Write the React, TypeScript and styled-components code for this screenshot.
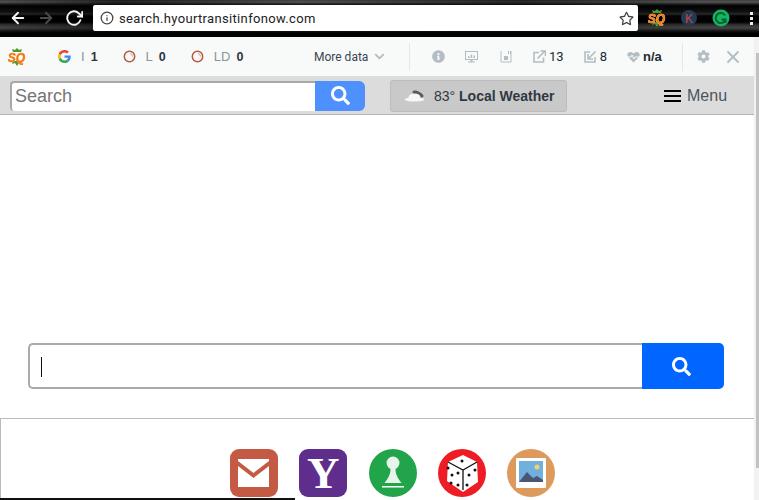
import styled, { createGlobalStyle } from 'styled-components'
import { FaSearch, FaInfoCircle, FaCog, FaRegStar } from 'react-icons/fa'
import { FiArrowLeft, FiArrowRight, FiRotateCw, FiInfo, FiX, FiChevronDown } from 'react-icons/fi'

const GlobalStyle = createGlobalStyle`
  html, body {
    margin: 0;
    padding: 0;
    background: #fff;
    overflow: hidden;
    font-family: 'Liberation Sans', Arial, sans-serif;
  }
`

const Page = styled.div`
  width: 759px;
  height: 500px;
  overflow: hidden;
  position: relative;
`

const ChromeBar = styled.div`
  height: 37px;
  box-sizing: border-box;
  display: flex;
  align-items: flex-start;
  background:
    linear-gradient(90deg, transparent 0, rgba(0, 0, 0, 0.55) 120px, transparent 300px, rgba(0, 0, 0, 0.5) 520px, transparent 700px),
    linear-gradient(180deg, #3c3c3c 0, #555 2px, #222 4px, #000 6px, #111 12px, #2a2a2a 14px, #000 16px, #000 22px, #333 25px, #444 28px, #151515 31px, #000 33px, #000 37px);
`

const NavButtons = styled.div`
  width: 93px;
  height: 32px;
  padding-left: 9px;
  box-sizing: border-box;
  display: flex;
  align-items: center;
  gap: 10px;
  margin-top: 2px;
`

const NavIcon = styled.span<{ $dim?: boolean }>`
  display: flex;
  font-size: 18px;
  color: ${p => (p.$dim ? '#4a4a4a' : '#f4f4f4')};
`

const Omnibox = styled.div`
  width: 545px;
  height: 26px;
  margin-top: 5px;
  background: #fff;
  border-radius: 2px;
  display: flex;
  align-items: center;
  padding: 0 4px 0 7px;
  box-sizing: border-box;
  font-family: 'Roboto', sans-serif;
  font-size: 13px;
  letter-spacing: 0.34px;
  color: #222;
  gap: 5px;
`

const UrlText = styled.span`
  flex: 1;
`

const Extensions = styled.div`
  flex: 1;
  height: 32px;
  display: flex;
  align-items: center;
  padding-left: 10px;
  gap: 14px;
  margin-top: 2px;
`

const ExtIcon = styled.svg`
  width: 18px;
  height: 18px;
  flex: none;
`

const LogoText = styled.text`
  font-family: 'Liberation Sans', sans-serif;
  font-size: 12px;
  font-weight: 700;
  font-style: italic;
  fill: #f47a12;
  stroke: #f47a12;
  stroke-width: 0.5px;
  filter: drop-shadow(0 0 0.6px #fff);
`

const Kebab = styled.div`
  display: flex;
  flex-direction: column;
  gap: 2px;
  margin-left: 6px;
`

const Dot = styled.i`
  width: 3px;
  height: 3px;
  background: #eee;
  display: block;
`

const SeoBar = styled.div`
  height: 39px;
  width: 754px;
  box-sizing: border-box;
  background: #f8f9f9;
  display: flex;
  align-items: center;
  padding-left: 8px;
  font-size: 13px;
  color: #3b4652;
`

const MetricList = styled.div`
  margin-left: 32px;
  width: 256px;
  display: flex;
  align-items: center;
  gap: 25px;
`

const Metric = styled.span`
  display: flex;
  align-items: center;
  color: #8a959c;
`

const MetricLabel = styled.span`
  margin: 0 6px 0 10px;
`

const MetricValue = styled.b`
  color: #2d3640;
  font-size: 12.5px;
`

const MoreData = styled.span`
  display: flex;
  align-items: center;
  gap: 4px;
  font-family: 'Roboto', sans-serif;
  font-size: 12px;
  color: #3b4652;
  width: 95px;
`

const Divider = styled.span`
  width: 1px;
  height: 28px;
  background: #e4e6e7;
  flex: none;
`

const IconStats = styled.div`
  display: flex;
  align-items: center;
  width: 272px;
  padding-left: 22px;
  box-sizing: border-box;
  gap: 20px;
  color: #b3bdc2;
  font-size: 13px;
`

const Stat = styled.span`
  display: flex;
  align-items: center;
  gap: 3px;
`

const StatValue = styled.span<{ $bold?: boolean }>`
  color: #222b33;
  font-size: 13px;
  font-weight: ${p => (p.$bold ? 700 : 400)};
  font-family: ${p => (p.$bold ? "'Liberation Sans'" : "'Roboto'")}, sans-serif;
`

const PageGlyph = styled.svg`
  width: 12px;
  height: 13px;
  margin: 0 1px 0 2px;
  flex: none;
`

const SeoTools = styled.div`
  display: flex;
  align-items: center;
  gap: 13px;
  padding-left: 14px;
  color: #b3bdc2;
  font-size: 13px;
`

const SearchRow = styled.div`
  height: 39px;
  width: 754px;
  box-sizing: border-box;
  background: #dcdcdc;
  border-bottom: 1px solid #b4b4b4;
  display: flex;
  align-items: center;
  padding: 1px 0 0 10px;
`

const TopSearch = styled.div`
  width: 355px;
  height: 30px;
  display: flex;
`

const TopInput = styled.div`
  flex: 1;
  background: #fff;
  border: 2px solid #a8a8a8;
  border-right: 0;
  border-bottom-width: 0;
  border-radius: 4px 0 0 4px;
  box-sizing: border-box;
  padding-left: 3px;
  font-size: 18px;
  line-height: 27px;
  color: #757575;
`

const TopButton = styled.div`
  width: 50px;
  background: #4d90fe;
  border-radius: 0 6px 6px 0;
  display: flex;
  align-items: center;
  justify-content: center;
  color: #fff;
  font-size: 19px;
`

const WeatherButton = styled.div`
  margin-left: 25px;
  width: 177px;
  height: 32px;
  box-sizing: border-box;
  background: #c9c9c9;
  border: 1px solid #bcbcbc;
  border-radius: 3px;
  display: flex;
  align-items: center;
  padding-left: 13px;
  gap: 8px;
  font-size: 14px;
  color: #2f3842;
`

const MenuLink = styled.div`
  margin-left: 97px;
  display: flex;
  align-items: center;
  gap: 6px;
  font-size: 16px;
  color: #4b5560;
`

const MenuBars = styled.span`
  width: 17px;
  height: 12px;
  display: flex;
  flex-direction: column;
  justify-content: space-between;
`

const MenuBar = styled.i`
  display: block;
  height: 2px;
  background: #000;
`

const Main = styled.div`
  width: 754px;
  box-sizing: border-box;
  padding: 228px 30px 0 28px;
`

const BigSearch = styled.div`
  height: 46px;
  display: flex;
`

const BigInput = styled.div`
  flex: 1;
  border: 2px solid #aaa;
  border-right: 0;
  border-radius: 5px 0 0 5px;
  display: flex;
  align-items: center;
  padding: 1px 0 0 11px;
`

const Caret = styled.span`
  width: 1px;
  height: 20px;
  background: #111;
`

const BigButton = styled.div`
  width: 82px;
  box-sizing: border-box;
  padding-right: 4px;
  background: #0066ff;
  border-radius: 0 5px 5px 0;
  display: flex;
  align-items: center;
  justify-content: center;
  color: #fff;
  font-size: 19px;
`

const AppsPanel = styled.div`
  margin-top: 29px;
  width: 754px;
  height: 82px;
  box-sizing: border-box;
  border-top: 1px solid #bbb;
  border-left: 1px solid #bbb;
  padding: 30px 0 0 229px;
  display: flex;
  gap: 21.25px;
`

const AppIcon = styled.svg`
  width: 48px;
  height: 48px;
  flex: none;
`

const YahooTile = styled.div`
  width: 48px;
  height: 48px;
  flex: none;
  border-radius: 9px;
  background: #5f2d8c;
  color: #fff;
  text-align: center;
  font-family: 'Liberation Serif', serif;
  font-weight: 700;
  font-size: 45px;
  line-height: 48px;
`

const ScrollTrack = styled.div`
  position: absolute;
  right: 0;
  top: 37px;
  bottom: 0;
  width: 5px;
  background: #f1f1f1;
`

const ScrollThumb = styled.div`
  position: absolute;
  right: 0;
  top: 16px;
  width: 3px;
  height: 415px;
  background: #c1c1c1;
`

const BottomLine = styled.div`
  position: absolute;
  left: 0;
  bottom: 0;
  width: 295px;
  height: 2px;
  background: #111;
`

const SqLogo = () => (
  <ExtIcon viewBox="0 0 18 18">
    <path d="M5 4L4 1l3 1 2-2 2 2 3-1-1 3zM5 13l-1 3 3-1 2 3 2-3 3 1-1-3z" fill="#4f9a2f" />
    <LogoText x="8.500" y="13.500" textAnchor="middle">SQ</LogoText>
  </ExtIcon>
)

const GoogleG = () => (
  <svg width="13" height="13" viewBox="0 0 48 48">
    <path fill="#EA4335" d="M24 9.500c3.500 0 6.700 1.300 9.100 3.400l6.800-6.800C35.800 2.400 30.300 0 24 0 14.600 0 6.500 5.400 2.600 13.200l7.900 6.200C12.400 13.600 17.700 9.500 24 9.500z" />
    <path fill="#4285F4" d="M46.900 24.500c0-1.600-.1-3.100-.4-4.500H24v9h12.900c-.6 3-2.200 5.500-4.800 7.200l7.700 6c4.500-4.200 7.100-10.300 7.100-17.700z" />
    <path fill="#FBBC05" d="M10.500 28.600c-.5-1.400-.8-3-.8-4.600s.3-3.200.8-4.600l-7.900-6.200C.9 16.500 0 20.100 0 24s.9 7.500 2.600 10.800z" />
    <path fill="#34A853" d="M24 48c6.500 0 11.900-2.100 15.900-5.800l-7.700-6c-2.200 1.400-4.900 2.300-8.200 2.300-6.300 0-11.600-4.100-13.500-9.900l-7.900 6.200C6.500 42.600 14.600 48 24 48z" />
  </svg>
)

const Ring = () => (
  <svg width="13" height="13" viewBox="0 0 13 13">
    <circle cx="6.500" cy="6.500" r="5.200" fill="none" stroke="#b5583f" strokeWidth="1.500" />
    <path d="M7 3.500a3 3 0 0 1 2.500 3" fill="none" stroke="#d9a08f" strokeWidth="1" />
  </svg>
)

const MonitorIcon = () => (
  <svg width="13" height="13" viewBox="0 0 13 13" fill="#b3bdc2">
    <path fillRule="evenodd" d="M0 1h13v9H7.500v1.500H10V12.500H3V11.500h2.500V10H0zM1 2v7h11V2z" />
    <path d="M3 6h1.500v2H3zM5.700 4.500h1.500V8H5.700zM8.500 5.500H10V8H8.500z" />
  </svg>
)

const PageIcon = () => (
  <PageGlyph viewBox="0 0 12 13" fill="none" stroke="#b3bdc2">
    <path d="M1 1v11h10V1" />
    <path d="M4 6h4v4H4z" fill="#b3bdc2" stroke="none" />
    <path d="M8.500 1v3M10.500 1v3" />
  </PageGlyph>
)

const LinkOutIcon = () => (
  <svg width="13" height="13" viewBox="0 0 13 13" fill="none" stroke="#b3bdc2" strokeWidth="1.600">
    <path d="M6 2.500H1v9.500h9.500V7.500" />
    <path d="M4.500 8.500L11.500 1.500M7.500 1h5v5" />
  </svg>
)

const LinkInIcon = () => (
  <svg width="13" height="13" viewBox="0 0 13 13" fill="none" stroke="#b3bdc2" strokeWidth="1.600">
    <path d="M6 2H1v10h10V7" />
    <path d="M11.500 1.500L4.500 8.500M4 4v5h5" />
  </svg>
)

const HeartIcon = () => (
  <svg width="13" height="12" viewBox="0 0 13 12" fill="#b3bdc2">
    <path d="M6.500 11.500L1 6C-.5 4 .5 1 3.300 1c1.400 0 2.500.8 3.200 1.800C7.200 1.800 8.300 1 9.700 1c2.800 0 3.800 3 2.300 5z" />
    <path d="M0 6h4l1-2 2 4 1-2h5" stroke="#f8f9f9" strokeWidth="1" fill="none" />
  </svg>
)

const Cloud = () => (
  <svg width="22" height="13" viewBox="0 0 22 13">
    <ellipse cx="14" cy="5" rx="6" ry="2.500" transform="rotate(25 14 5)" fill="#5a5a5a" />
    <ellipse cx="10.500" cy="8" rx="6" ry="3.500" fill="#f6f6f6" />
    <ellipse cx="10.500" cy="10.500" rx="10" ry="2" fill="#f6f6f6" />
  </svg>
)

const App = () => (
  <Page>
    <GlobalStyle />
    <ChromeBar>
      <NavButtons>
        <NavIcon><FiArrowLeft strokeWidth={2.500} /></NavIcon>
        <NavIcon $dim><FiArrowRight strokeWidth={2.500} /></NavIcon>
        <NavIcon><FiRotateCw strokeWidth={2.500} /></NavIcon>
      </NavButtons>
      <Omnibox>
        <FiInfo size={14} color="#444" strokeWidth={2.200} />
        <UrlText>search.hyourtransitinfonow.com</UrlText>
        <FaRegStar size={15} color="#444" />
      </Omnibox>
      <Extensions>
        <SqLogo />
        <ExtIcon viewBox="0 0 18 18">
          <circle cx="9" cy="9" r="8" fill="#243a52" />
          <text x="9" y="13.500" textAnchor="middle" fontSize="12" fill="#c8473f" fontFamily="Liberation Sans">K</text>
        </ExtIcon>
        <ExtIcon viewBox="0 0 18 18">
          <circle cx="9" cy="9" r="8.500" fill="#15b36b" />
          <path d="M13 6.500A5 5 0 1 0 13.500 10.500H9.500M13.500 10.500V14" fill="none" stroke="#062" strokeWidth="2" />
        </ExtIcon>
        <Kebab><Dot /><Dot /><Dot /></Kebab>
      </Extensions>
    </ChromeBar>

    <SeoBar>
      <SqLogo />
      <MetricList>
        <Metric><GoogleG /><MetricLabel>I</MetricLabel><MetricValue>1</MetricValue></Metric>
        <Metric><Ring /><MetricLabel>L</MetricLabel><MetricValue>0</MetricValue></Metric>
        <Metric><Ring /><MetricLabel>LD</MetricLabel><MetricValue>0</MetricValue></Metric>
      </MetricList>
      <MoreData>More data <FiChevronDown size={15} color="#b3bdc2" strokeWidth={3} /></MoreData>
      <Divider />
      <IconStats>
        <FaInfoCircle />
        <MonitorIcon />
        <PageIcon />
        <Stat><LinkOutIcon /><StatValue>13</StatValue></Stat>
        <Stat><LinkInIcon /><StatValue>8</StatValue></Stat>
        <Stat><HeartIcon /><StatValue $bold>n/a</StatValue></Stat>
      </IconStats>
      <Divider />
      <SeoTools>
        <FaCog />
        <FiX size={20} strokeWidth={2.200} />
      </SeoTools>
    </SeoBar>

    <SearchRow>
      <TopSearch>
        <TopInput>Search</TopInput>
        <TopButton><FaSearch /></TopButton>
      </TopSearch>
      <WeatherButton>
        <Cloud />
        <span>83° <b>Local Weather</b></span>
      </WeatherButton>
      <MenuLink>
        <MenuBars><MenuBar /><MenuBar /><MenuBar /></MenuBars>
        Menu
      </MenuLink>
    </SearchRow>

    <Main>
      <BigSearch>
        <BigInput><Caret /></BigInput>
        <BigButton><FaSearch /></BigButton>
      </BigSearch>
    </Main>
    <AppsPanel>
      <AppIcon viewBox="0 0 48 48">
        <rect width="48" height="48" rx="9" fill="#c55a44" />
        <path d="M8 10h31v28H8z" fill="#fff" />
        <path d="M8 12l15.500 12L39 12v5L23.500 29 8 17z" fill="#c55a44" />
      </AppIcon>
      <YahooTile>Y</YahooTile>
      <AppIcon viewBox="0 0 48 48">
        <circle cx="24" cy="24" r="24" fill="#22a54a" />
        <circle cx="24" cy="14" r="6.500" fill="#e8f3ea" />
        <path d="M21.500 20h5c0 6 3 10 6 14H15.500c3-4 6-8 6-14z" fill="#e8f3ea" />
        <path d="M13 37h22v1.500H13z" fill="#fff" />
      </AppIcon>
      <AppIcon viewBox="0 0 48 48">
        <circle cx="24" cy="24" r="24" fill="#ee1c25" />
        <path d="M25 6l14 7 1 20-15 10-16-11 1-19z" fill="#fff" />
        <path d="M10 13l15 8 14-8M25 21v20" fill="none" stroke="#111" strokeWidth="1.300" />
        <g fill="#111">
          <circle cx="24" cy="12" r="1.500" />
          <circle cx="10" cy="19" r="1.500" />
          <circle cx="20" cy="24" r="1.500" />
          <circle cx="14" cy="26" r="1.500" />
          <circle cx="13" cy="34" r="1.500" />
          <circle cx="20" cy="36" r="1.500" />
          <circle cx="37" cy="21" r="1.500" />
          <circle cx="31" cy="26" r="1.500" />
          <circle cx="29" cy="36" r="1.500" />
        </g>
      </AppIcon>
      <AppIcon viewBox="0 0 48 48">
        <circle cx="24" cy="24" r="24" fill="#de9a5c" />
        <rect x="9" y="9" width="30" height="30" rx="1" fill="#fff" />
        <rect x="12" y="12" width="24" height="21" fill="#6fb0dc" />
        <circle cx="30" cy="18" r="2.500" fill="#f6cf6b" />
        <path d="M12 33l8-10 6 6 4-2 6 4v2z" fill="#4a5674" />
      </AppIcon>
    </AppsPanel>
    <ScrollTrack><ScrollThumb /></ScrollTrack>
    <BottomLine />
  </Page>
)

export default App
